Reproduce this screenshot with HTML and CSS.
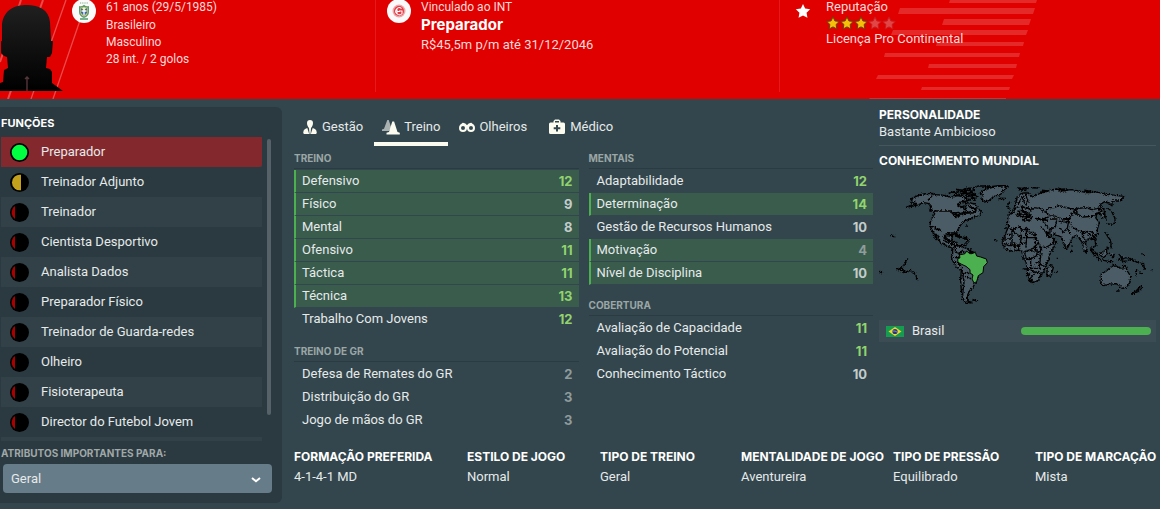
FILE: index.html
```html
<!DOCTYPE html>
<html lang="pt">
<head>
<meta charset="utf-8">
<meta name="viewport" content="width=device-width, initial-scale=1">
<title>Preparador</title>
<link rel="stylesheet" href="styles.css">
</head>
<body>
<svg class="defs" width="0" height="0" aria-hidden="true">
  <defs>
    <symbol id="star" viewBox="0 0 14 14"><path d="M7 .8 8.900 4.900l4.400.5-3.200 3.100.8 4.500L7 10.900 3.100 13l.8-4.500L.7 5.400l4.400-.5z"/></symbol>
    <symbol id="full" viewBox="0 0 19 19"><circle cx="9.500" cy="9.500" r="9.500"/><circle cx="9.500" cy="9.500" r="7.800" fill="#00ff41"/></symbol>
    <symbol id="half" viewBox="0 0 19 19"><circle cx="9.500" cy="9.500" r="9.500"/><path d="M11 1.800A7.800 7.800 0 1 0 11 17.200z" fill="#c4a11c"/></symbol>
    <symbol id="low" viewBox="0 0 19 19"><circle cx="9.500" cy="9.500" r="9.500"/><path d="M5 3.100a7.800 7.800 0 0 0 0 12.800z" fill="#a90000"/></symbol>
  </defs>
</svg>
<div class="page">
  <header class="profile">
    <svg class="profile-art" width="1160" height="99" viewBox="0 0 1160 99" aria-hidden="true">
      <g stroke="#ea4a4a" stroke-width="1.3"><path d="M21 0 0 62M43 0 8 99" stroke-width="2"/><path d="M66 0 31 99M87 0 53 99"/></g>
      <path fill="#e52929" d="M950 0h87l-1 3h-87zM900 8h135l-2 6H898zM944 19h87l-2 6h-87zM893 30h135l-2 5H891zM937 42h87l-1 4h-87zM885 53h135l-1 4H884zM929 64h88l-1 4h-88zM878 75h136l-2 4H876zM922 87h88l-1 3h-88zM870 98h136v1H869z"/>
    </svg>
    <section class="person">
      <svg class="portrait" width="64" height="91" viewBox="0 0 64 91" aria-hidden="true">
        <defs><linearGradient id="skin" x1="0" y1="0" x2="0" y2="1"><stop offset="0" stop-color="#202020"/><stop offset="1" stop-color="#000"/></linearGradient></defs>
        <path fill="url(#skin)" d="M27 5C39 5 49 10 50 22L51 41h2l-1 12-2 4h-3l-1 11 4 1 2 3v11l11 8H0v-8l3-1 1-12 4-2-1-11-3-1-3-3V41h1L2 24C4 10 14 5 27 5z"/>
        <path d="M27 77v14M25 79l2-2 2 2" stroke="#54363a" stroke-width="1.4" fill="none"/>
      </svg>
      <svg class="crest" width="24" height="24" viewBox="0 0 24 24" aria-hidden="true">
        <circle cx="12" cy="11" r="12" fill="#fafafa"/>
        <path d="M7 6q2.500 1 5-1.200Q14.500 7 17 6v6q0 4-5 6-5-2-5-6z" fill="#5d9b72"/><path d="M8.500 7.500h7v4.500q0 3-3.500 4.500-3.500-1.500-3.500-4.500z" fill="#eadb62"/><path d="m9 8 3 2 3-2v5l-3 3-3-3z" fill="#416aa8"/><path d="M12 7.500v8M9.500 11h5" stroke="#fff" stroke-width="1.300"/><path d="M8 3h8" stroke="#77a985" stroke-dasharray="1 .8"/><path d="M8 19h8" stroke="#4b9b6a" stroke-width="1.500"/>
      </svg>
      <div class="facts">
        <p class="lead">61 anos (29/5/1985)</p>
        <p>Brasileiro</p>
        <p>Masculino</p>
        <p>28 int. / 2 golos</p>
      </div>
    </section>
    <section class="contract">
      <svg class="crest" width="24" height="24" viewBox="0 0 24 24" aria-hidden="true">
        <circle cx="12" cy="11" r="12" fill="#fafafa"/><circle cx="12" cy="11" r="6.500" fill="#f2a5a9"/><circle cx="12" cy="11" r="5" fill="#e33b43"/>
        <path d="M14.500 8.500a3.500 3.500 0 1 0 .5 5v-2.500h-3M10 9.500v4M10 11.500h3" fill="none" stroke="#fff" stroke-width="1.100"/>
      </svg>
      <div class="stack">
        <p class="small">Vinculado ao INT</p>
        <h1>Preparador</h1>
        <p>R$45,5m p/m até 31/12/2046</p>
      </div>
    </section>
    <section class="standing">
      <svg class="badge-star" width="16" height="16" aria-hidden="true"><use href="#star" fill="#fff"/></svg>
      <div class="rank">
        <p>Reputação</p>
        <div class="stars" role="img" aria-label="3 de 5 estrelas">
          <svg class="on"><use href="#star"/></svg><svg class="on"><use href="#star"/></svg><svg class="on"><use href="#star"/></svg><svg class="off"><use href="#star"/></svg><svg class="off"><use href="#star"/></svg>
        </div>
        <p>Licença Pro Continental</p>
      </div>
    </section>
  </header>

  <div class="body">
    <aside class="sidebar">
      <h2>FUNÇÕES</h2>
      <div class="roles">
        <ul>
          <li><button class="role selected" type="button"><svg><use href="#full"/></svg>Preparador</button></li>
          <li><button class="role" type="button"><svg><use href="#half"/></svg>Treinador Adjunto</button></li>
          <li><button class="role" type="button"><svg><use href="#low"/></svg>Treinador</button></li>
          <li><button class="role" type="button"><svg><use href="#low"/></svg>Cientista Desportivo</button></li>
          <li><button class="role" type="button"><svg><use href="#low"/></svg>Analista Dados</button></li>
          <li><button class="role" type="button"><svg><use href="#low"/></svg>Preparador Físico</button></li>
          <li><button class="role" type="button"><svg><use href="#low"/></svg>Treinador de Guarda-redes</button></li>
          <li><button class="role" type="button"><svg><use href="#low"/></svg>Olheiro</button></li>
          <li><button class="role" type="button"><svg><use href="#low"/></svg>Fisioterapeuta</button></li>
          <li><button class="role" type="button"><svg><use href="#low"/></svg>Director do Futebol Jovem</button></li>
          <li class="next"></li>
        </ul>
        <div class="scrollbar"></div>
      </div>
      <label for="focus">ATRIBUTOS IMPORTANTES PARA:</label>
      <div class="select">
        <select id="focus"><option>Geral</option></select>
        <svg width="10" height="6" viewBox="0 0 10 6" aria-hidden="true"><path d="m1 1 4 3.300L9 1" fill="none" stroke="#fff" stroke-width="2"/></svg>
      </div>
    </aside>

    <main class="content">
      <div class="attributes">
        <nav class="tabs">
          <button type="button"><svg width="16" height="16" viewBox="0 0 16 16" aria-hidden="true"><path d="M8 1c2 0 3 1.300 3 3.100C11 6.500 9.800 8.200 9 9l-.5 6h-1L7 9C6.200 8.200 5 6.500 5 4.100 5 2.300 6 1 8 1z"/><path d="M5.300 9 3 10Q1.200 10.800 1.200 14l.8 1h5.200zM10.700 9l2.300 1q1.800.8 1.800 4l-.8 1H8.800z"/></svg>Gestão</button>
          <button type="button" class="active"><svg width="18" height="16" viewBox="0 0 18 16" aria-hidden="true"><path fill="#aab2b1" d="M5.300 1h1.400l3 9-3 2H0v-1.400l2-.8z"/><path d="M10.300 2.500h1.800L15.500 13l2.300.8v1.700H4.500v-1.700L7 13z"/></svg>Treino</button>
          <button type="button"><svg width="16" height="16" viewBox="0 0 16 16" aria-hidden="true"><g fill="none" stroke="#fbfbf0" stroke-width="2"><circle cx="4" cy="9" r="3"/><circle cx="12" cy="9" r="3"/><path d="M2 6.500 4 4.800q2 0 3.500 2.200h1Q10 4.800 12 4.800l2 1.700M7 8.500h2"/></g></svg>Olheiros</button>
          <button type="button" class="medical"><svg width="18" height="16" viewBox="0 0 18 16" aria-hidden="true"><path fill-rule="evenodd" d="M5.500 3.500V2L7 .5h4L12.500 2v1.500h3q1.500 0 1.500 1.500v8.500q0 1.500-1.500 1.500h-13Q1 15 1 13.500V5q0-1.500 1.500-1.500zm1.500 0h4V2H7zm1 2.500v2.300H5.700v2H8v2.300h2v-2.300h2.300v-2H10V6z"/></svg>Médico</button>
        </nav>
        <div class="columns">
          <div>
            <table>
              <caption>TREINO</caption>
              <tr class="key"><th>Defensivo</th><td class="good">12</td></tr>
              <tr class="key"><th>Físico</th><td>9</td></tr>
              <tr class="key"><th>Mental</th><td>8</td></tr>
              <tr class="key"><th>Ofensivo</th><td class="good">11</td></tr>
              <tr class="key"><th>Táctica</th><td class="good">11</td></tr>
              <tr class="key"><th>Técnica</th><td class="good">13</td></tr>
              <tr><th>Trabalho Com Jovens</th><td class="good">12</td></tr>
            </table>
            <table>
              <caption>TREINO DE GR</caption>
              <tr><th>Defesa de Remates do GR</th><td class="poor">2</td></tr>
              <tr><th>Distribuição do GR</th><td class="poor">3</td></tr>
              <tr><th>Jogo de mãos do GR</th><td class="poor">3</td></tr>
            </table>
          </div>
          <div>
            <table>
              <caption>MENTAIS</caption>
              <tr><th>Adaptabilidade</th><td class="good">12</td></tr>
              <tr class="key"><th>Determinação</th><td class="good">14</td></tr>
              <tr><th>Gestão de Recursos Humanos</th><td>10</td></tr>
              <tr class="key"><th>Motivação</th><td class="poor">4</td></tr>
              <tr class="key"><th>Nível de Disciplina</th><td>10</td></tr>
            </table>
            <table>
              <caption>COBERTURA</caption>
              <tr><th>Avaliação de Capacidade</th><td class="good">11</td></tr>
              <tr><th>Avaliação do Potencial</th><td class="good">11</td></tr>
              <tr><th>Conhecimento Táctico</th><td>10</td></tr>
            </table>
          </div>
        </div>
      </div>

      <section class="world">
        <h2>PERSONALIDADE</h2>
        <p class="trait">Bastante Ambicioso</p>
        <h2 class="knowledge">CONHECIMENTO MUNDIAL</h2>
        <svg class="map" viewBox="27 0 831 420" role="img" aria-label="Mapa mundial">
          <defs>
            <filter id="coast" x="0" y="0" width="100%" height="100%">
              <feTurbulence type="fractalNoise" baseFrequency=".25" numOctaves="2" seed="4"/>
              <feDisplacementMap in="SourceGraphic" scale="11" xChannelSelector="R" yChannelSelector="G"/>
            </filter>
          </defs>
          <g filter="url(#coast)">
          <g fill="#4b5c66" stroke="#000" stroke-width="4" stroke-linejoin="bevel">
            <path d="M108 97l22-9 8-6-18-1 8-6-4-4 20-9 14-5 28-2 12 4 24 2 20 6 20-5 16 3 16 10-4 8-12-4-14 6 2 8 14 4 4 10 6-10-2-10 10-4 14 4 10 10 12 14-6 10-20 6-12 6-10 4-12 10-10 16-4 12 6 12-8-4-6-10-14 2-10 2-6 8 2 12 8 6 12-6-2 10 8 2 2 10 12 6 8 2-2 6-12-4-16-12-18-8-14-8-6-16-10-12 8 22-10-12-4-14-8-16 2-18 12-18-2-8-10-6 2-10-10-8-12-2-10 4-14 4z"/>
            <path fill="none" d="M178 108h64l10 6 14-2 4 4 18-6M176 84l6 10-4 6 6 8M190 58l-18 20M178 153l14 3 8 8 8-2 6 8M244 112l8 8 8-4-4 12 14-8M262 92l10 6 12-6"/>
            <path d="M346 44l24-8 34-4 6 6-12 10-6 10-20 6-14 12-16 6-6-12 4-10-10-6z"/>
            <path d="M256 211l-8 10 0 16-4 10 6 14 12 18 12 6-2 30 2 32 4 24 10 14 18 2-14-12 0-12 6-16 10-8 6-12 10-16-14-72-18-18-20-6z"/>
            <path fill="none" d="M256 213l0 18 12 4-2 14-14-2M268 236l10-10 8 6M302 220v14M250 261l14 2 10 12 4 22 12-6 8 6M278 300l4 20-4 40M285 304l18 8M272 330l6 0"/>
            <path d="M224 184l8-2 12 2 6-8-6 20 10 6 8 0-4 10-12-6-12-10zM256 184h12l12 4M282 188l14 6-6 5M236 180l20-3 14 6M260 211l30 1M286 152l8 2"/>
          </g>
          <g fill="none" stroke="#000" stroke-width="5" stroke-linejoin="bevel">
            <path d="M236 55l14-4 8 5 12-9 10 4 12-6 12 4 10-7M258 43l20 3 10-6 20-1 18-6 30 0M262 50l22-2 8 8 16-4 8 8M270 58l16-4 10 8 14-4 12 8M286 70l10 6 10-8 8 10M255 61l26-2M278 77l10 4M300 47l10 8 8 2M384 70l24 1M344 38l60-8 12 7M280 50l14 14 12-2 12 14M292 90l16 8 14 10-30 4-20 8"/>
            <path d="M256 118l12 4 16-8 24 0 10-6M64 181l12 6M78 280l15 2 12-16 8-16M86 285l22 5 16-4M125 290l10 8M28 289l8 4M138 304l4 12M372 194l10 4M307 374l14 4M292 380l16 3M284 208l10-10M300 230l14 3M224 186l14 12 16 12M250 172l8 10 20 6 12 0 4 16"/>
          </g>
          </g>
          <path fill="#4caf50" stroke="#000" stroke-width="3" d="M268 240l17-4 5-8 9 8 6 0 11-4 4 11 12 3 17 6 3 11-11 12-2 18-14 9-5 18-8 4-6-12 3-12-9-6 0-10-12-10-13-6-11-6-1-9 7-5z"/>

          <g filter="url(#coast)">
          <g fill="#4b5c66" stroke="#000" stroke-width="4" stroke-linejoin="bevel">
            <path d="M410 168l4-10 14-6 30 0 8 8 16-5 26 2 14 26 8 16 10 4 20-4-12 24-10 14-2 18-10 16-4 18-10 12-6 14-16 8-8-2-10-24 0-18-4-18-8-14-4-16-10-6-18 4-20-6-12-20z"/>
            <path fill="none" d="M394 192h32v-32M426 166l28 22-4 22h-22M454 188v-26l8-8M454 188h42v38M468 156l2 30M486 156v24h34M496 180v36l-14 8M470 182l-2 36M482 224l-22 8M410 178l14 0M426 192v18M434 202v22M446 208l0 18M456 206l12-4M496 214l12-14 10 0M508 200l6 16-4 18-14-6M472 226l20 2 10-4-2 18-18 10-14-4-4-14M500 242l18-6M512 240l-2 22-14 2M460 252l22 2v28h-24M482 280h24M482 284l12 10 12-6M468 302l12-8M474 318l20-22M472 316l20 2M500 290l12 8M508 266l14 8M508 270l4 14"/>
            <path d="M530 300l12 4 8-26-8-10-10 14z"/>
            <path d="M412 148l2-26 18-10 4-22 6-26 14-10 18 0 14 12 28-14 42-10 20 4 28-2 40 8 30-2 34 8 52 6-12 14-24 0 0 16-8-10-14-4-16 10 14 14 4 20-10 6-4-14-12-2-2 16 10 12-6 20 0 16-18 16-10-2-10 10 8 18-4 14-8-12-2-18-10-14-8-10-12 6-8 18-10 20-8-16-8-22-10-4-22-4-14-6 12 18 14 0-6 16-18 10-18 2-12-26-6-20-16 0-6-12-14 6-10-10-10 2-12 8z"/>
            <path fill="none" d="M444 88l14-24 6 22M466 56l8 24-8 10M430 100l22-6 18 6 20 2M442 108l24 4M456 92l2 22M472 96l12 14M450 126l20-10 10 10-18 4"/>
            <path fill="none" d="M490 98l20 2 16 12 10-14 16 0 14-6 32 8 18 2 6 10-16 4-8 14-22 2-16-8-20-2-12-10M610 110l12-10 26-2 18 6 18-4 6 12-22 12-30 2zM606 112l-8 20M684 98l14 12 12 24M596 134l10 22 20 12 18 4M560 136l-4 20-20 10M566 138l16 4 14-4-4 22-12 12-10-14M536 126l-22 8M516 136l14 18 14 12M496 130l24 6M512 154l18 20 12-4M594 162l6 16M634 172l8 4 10-8M636 170l2 16 8 6M652 168l10 18M660 168l20 14M662 180l10 4 6 14M528 174l8 14 20-14"/>
            <path d="M694 296l12-6 14-12 14-8 10 6 14 6 6-14 8 20 10 16-2 18-10 14-14 4-8-10-14-4-18 2-18 4-6-6 2-14z"/>
            <path d="M660 222l14 20 12 10-4-12-12-16zM688 238l12-8 10-8 0 18-10 8zM716 235l8 4 4 10 6-14M746 238l12 12 18-2 10 6 20 10"/>
          </g>
          <g fill="none" stroke="#000" stroke-width="5" stroke-linejoin="bevel">
            <path d="M444 39l12 2 8-3 12 2M446 44l24 2M486 38l20 1M562 39l12 4 12-1M516 46l16 2M514 54l20-6M564 47l22 0 8-3M642 46l26 4M646 52l16 0"/>
            <path d="M684 252l34 8 12 0M662 222l16 22M706 172l8 14 8 10 2 24M710 215l6 8M712 98l12 10 10 20 2 16-14 4-10-2M742 250l20 10 18-6 12 4 16 6M752 246l8 14M606 216l0-5M602 234l4-10M814 236l8 3M820 262l4 22M800 282l-2 22M812 264l10 10M808 294l10 2M840 284l8 0M740 348l9 0M782 358l16-10 14-14 6 2-14 14zM560 250h4M556 293l6-2M412 94l10 10 8 2M412 92l8-12M416 110l8 6M404 160l16-4M402 206l14 6 12 0M660 188l14 8 4 16-14 8M670 182l10 12" stroke-width="4"/>
            <path d="M452 104l12 8 6 12 14-4M448 114l12 14M460 108l18 6M444 124l12-8M440 124l4-10M468 130l10 8 8-12M458 132l8 8M476 116l10 10M500 128l14 6M516 130l18 8M540 132l22 0M580 132l20 2"/>
          </g>
          </g>
        </svg>
        <div class="nation">
          <svg width="18" height="11" viewBox="0 0 18 11" aria-hidden="true"><path fill="#169c50" d="M0 0h18v11H0z"/><path fill="#f3d52f" d="m9 1 6.500 4.500L9 10 2.500 5.500z"/><circle cx="9" cy="5.500" r="2.600" fill="#26347f"/><path d="M6.700 5q2.500-.5 4.500 1.200" stroke="#c8cfdf" stroke-width=".6" fill="none"/></svg>
          <span>Brasil</span>
          <div class="meter"></div>
        </div>
      </section>

      <dl class="style">
        <div><dt>FORMAÇÃO PREFERIDA</dt><dd>4-1-4-1 MD</dd></div>
        <div><dt>ESTILO DE JOGO</dt><dd>Normal</dd></div>
        <div><dt>TIPO DE TREINO</dt><dd>Geral</dd></div>
        <div><dt>MENTALIDADE DE JOGO</dt><dd>Aventureira</dd></div>
        <div><dt>TIPO DE PRESSÃO</dt><dd>Equilibrado</dd></div>
        <div><dt>TIPO DE MARCAÇÃO</dt><dd>Mista</dd></div>
      </dl>
    </main>
  </div>
</div>
</body>
</html>
```
FILE: styles.css
```css
* { box-sizing: border-box; }
body, h1, h2, p, ul, dl, dd { margin: 0; padding: 0; }
body {
  background: #33464d;
  color: #e6eaea;
  font: 13px/18px Roboto, "Liberation Sans", sans-serif;
  overflow-x: hidden;
}
button, select { font: inherit; color: inherit; border: 0; background: none; }
.defs { position: absolute; }
.page { display: flex; flex-direction: column; min-height: 100vh; }

/* Profile header */
.profile {
  position: relative;
  display: grid;
  grid-template-columns: 375fr 404fr 381fr;
  height: 99px;
  padding-bottom: 7px;
  background: #e10000;
  color: #fbdada;
  overflow: hidden;
}
.profile-art { position: absolute; left: 0; top: 0; }
.profile section { position: relative; display: flex; align-items: flex-start; min-width: 0; }
.profile section + section { border-left: 1px solid #e61a1a; }
.portrait { flex: none; }
.crest { flex: none; }
.person .crest { margin-left: 8px; }
.facts { margin-left: 10px; font-size: 12px; line-height: 17px; }
.facts .lead { line-height: 14px; margin-bottom: 3px; }
.contract { padding-left: 11px; }
.stack { margin-left: 10px; }
.stack .small { font-size: 12px; line-height: 14px; }
.stack h1 { margin: 1px 0; font: 700 15px/20px Inter, sans-serif; color: #fff; }
.badge-star { flex: none; margin: 3px 0 0 15px; }
.rank { margin-left: 15px; line-height: 14px; }
.stars { display: flex; height: 18px; align-items: center; }
.stars svg { width: 14px; height: 14px; overflow: visible; }
.stars symbol, .stars use { overflow: visible; }
.stars .on { fill: #f5bf0a; stroke: #63420b; }
.stars .off { fill: #e14545; stroke: #c91c1c; }

/* Body */
.body {
  flex: 1;
  display: grid;
  grid-template-columns: 282px minmax(0, 1fr);
  padding: 8px 0 6px;
}
h2, dt, .sidebar label, caption { font-family: Inter, sans-serif; font-weight: 700; white-space: nowrap; }
h2 { font-size: 12px; line-height: 16px; color: #fff; }

.sidebar {
  display: flex;
  flex-direction: column;
  padding: 6px 10px 10px 1px;
  background: #2b3a41;
  border-radius: 0 6px 6px 0;
}
.sidebar h2 { font-size: 11px; line-height: 20px; margin-bottom: 4px; }
.roles { flex: 1 1 0; min-height: 0; display: flex; gap: 5px; padding-right: 1px; overflow: hidden; }
.roles ul { flex: 1; list-style: none; }
.role {
  display: flex;
  align-items: center;
  gap: 12px;
  width: 100%;
  height: 30px;
  padding: 0 9px;
  text-align: left;
}
.role svg { width: 19px; height: 19px; }
.roles li:nth-child(odd) { background: #314147; }
.roles .next { height: 30px; }
.role.selected { background: #83292e; border-radius: 0 0 3px 0; }
.scrollbar { width: 4px; height: 276px; margin-top: 2px; border-radius: 2px; background: #566168; }
.sidebar label { margin-top: 2px; font-size: 10px; line-height: 20px; color: #a0a8a8; }
.select { position: relative; margin: 1px 0 0 2px; }
.select select {
  display: block;
  width: 100%;
  height: 29px;
  padding: 0 8px;
  appearance: none;
  border-radius: 4px;
  background: #667c89;
}
.select svg { position: absolute; right: 11px; top: 13px; }

/* Content */
.content {
  display: grid;
  grid-template-columns: minmax(0, 579fr) minmax(0, 277fr);
  grid-template-rows: auto 1fr;
  column-gap: 6px;
  padding: 0 4px 0 12px;
}
.tabs { display: flex; gap: 3px; height: 39px; padding-top: 5px; }
.tabs button {
  display: flex;
  align-items: center;
  gap: 4px;
  padding: 0 8px;
  border-bottom: 4px solid transparent;
}
.tabs svg { fill: #fbfbf0; }
.tabs .active { border-bottom-color: #fbfbf0; }
.tabs .medical { margin-left: 2px; }
.columns { display: grid; grid-template-columns: 1fr 1fr; column-gap: 10px; }
table { width: 100%; border-collapse: separate; border-spacing: 0; margin-bottom: 8px; }
caption {
  height: 23px;
  margin-bottom: 1px;
  padding-top: 3px;
  border-bottom: 1px solid #2b3b42;
  font-size: 10px;
  line-height: 18px;
  text-align: left;
  color: #9ba6a6;
}
th, td { height: 23px; padding: 0 6px; border-bottom: 1px solid #33464d; line-height: 20px; }
th { border-left: 2px solid transparent; background-clip: padding-box; text-align: left; font-weight: 400; }
td { text-align: right; font: 700 13px/20px Inter, sans-serif; color: #c3cccb; }
.key th, .key td { background-color: #395c4d; }
.key th { border-left-color: #4caf50; }
td.good { color: #92d36e; }
td.poor { color: #8f9c9c; }

.trait { padding-bottom: 4px; border-bottom: 1px solid #45565c; }
.knowledge { margin-top: 7px; }
.map { display: block; width: 100%; margin-top: 6px; }
.nation {
  display: flex;
  align-items: center;
  height: 22px;
  margin-top: 5px;
  padding: 0 5px 0 7px;
  background: #3c4c54;
}
.nation span { flex: 1; margin-left: 8px; }
.meter { width: 49%; height: 8px; border-radius: 4px; background: #4caf50; }

.style {
  grid-column: 1 / -1;
  display: grid;
  grid-template-columns: 173fr 133fr 141fr 152fr 142fr 121fr;
  margin-top: 7px;
  line-height: 20px;
}
.style div { min-width: 0; }
dt { font-size: 12px; color: #fff; }
```
